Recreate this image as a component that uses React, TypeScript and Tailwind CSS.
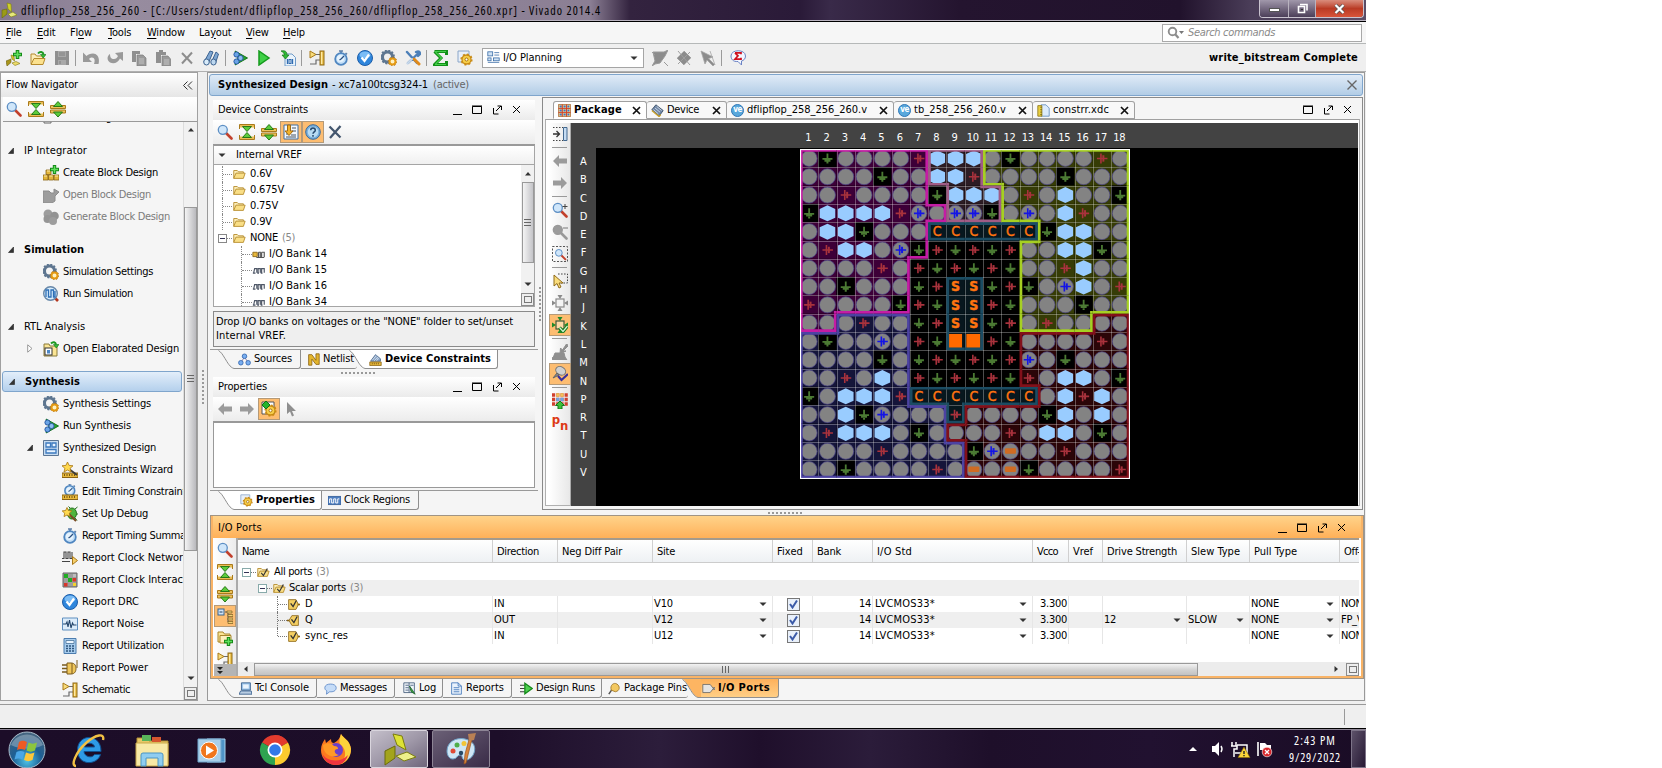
import { useLayoutEffect, useRef } from "react";
import type { ReactNode } from "react";

/** Single-line label; when `w` is given the tracking is adjusted so the label spans that width. */
function T({ children, w, b, className = "" }: { children: string; w?: number; b?: boolean; className?: string }) {
  const ref = useRef<HTMLSpanElement>(null);
  useLayoutEffect(() => {
    const el = ref.current;
    if (!el || !w) return;
    el.style.letterSpacing = "0px";
    const natural = el.getBoundingClientRect().width;
    el.style.letterSpacing = `${(w - natural) / children.length}px`;
  }, [w, children]);
  return (
    <span ref={ref} className={`inline-block shrink-0 whitespace-pre tracking-[-0.3px] ${b ? "font-bold" : ""} ${className}`}>
      {children}
    </span>
  );
}

const gold = "#e8b93c";
const dgold = "#8a6414";

const mag = (lens: string, handle: string) => (
  <>
    <path d="M9 9l5.500 5.500" stroke={handle} strokeWidth="2.600" strokeLinecap="round" />
    <circle cx="5.800" cy="5.800" r="4.500" fill={lens} stroke={handle === "#999" ? "#999" : "#5d8fc4"} strokeWidth="1.300" />
  </>
);
const gears = (
  <>
    <circle cx="6.500" cy="7" r="5" fill="none" stroke="#5e7690" strokeWidth="3" />
    <circle cx="6.500" cy="7" r="6.500" fill="none" stroke="#5e7690" strokeWidth="1.800" strokeDasharray="2 1.400" />
    <circle cx="11.500" cy="11.500" r="3" fill="#fff1c0" stroke="#e59a12" strokeWidth="2" />
    <circle cx="11.500" cy="11.500" r="4.300" fill="none" stroke="#b8740c" strokeWidth="1" strokeDasharray="1.600 1.700" />
  </>
);
const goldGear = (
  <>
    <circle cx="9.500" cy="9.500" r="4.500" fill="#f7cf4a" stroke="#c98a12" strokeWidth="1.300" />
    <circle cx="9.500" cy="9.500" r="5.400" fill="none" stroke="#c98a12" strokeWidth="1.400" strokeDasharray="2 2.200" />
    <circle cx="9.500" cy="9.500" r="1.500" fill="#fff" stroke="#a87008" />
  </>
);
const watch = (
  <>
    <path d="M6 1h4M8 1v3M12.500 3l1.500 1.300" stroke="#5d7fa8" strokeWidth="1.600" />
    <circle cx="8" cy="9" r="5.800" fill="#c3dff7" stroke="#4f86c0" strokeWidth="1.800" />
    <circle cx="7.500" cy="8.500" r="3.600" fill="#e6f3fd" />
    <path d="M8 9l3-3M8 9l-1.500 1" stroke="#284f80" strokeWidth="1.300" />
  </>
);
const check = (
  <>
    <circle cx="8" cy="8" r="7.500" fill="#2f86dc" stroke="#1c5da8" />
    <ellipse cx="8" cy="5" rx="5.500" ry="3.500" fill="#7bbcf5" />
    <path d="M4.500 7.500l3 3.500 4.500-6.500" stroke="#fff" strokeWidth="2.200" fill="none" />
  </>
);
const schem = (
  <>
    <path d="M1 1v7l6-3.500z" fill="#f8dc7a" stroke="#a87a1a" />
    <path d="M7 4.500h4M1 14h6v-4h4" stroke="#6b6b6b" strokeWidth="1.200" fill="none" />
    <rect x="11" y="1" width="4" height="14" fill={gold} stroke="#8f6a18" />
    <rect x="12" y="2" width="1.300" height="12" fill="#fce9a5" />
  </>
);
const runSyn = (
  <>
    <path d="M3 1l12.500 7L3 15l3-7z" fill="#27a52c" stroke="#17751b" />
    <circle cx="4.500" cy="4.500" r="2.600" fill="#6aa4e6" stroke="#2a5ca6" />
    <circle cx="4.500" cy="11.500" r="2.600" fill="#6aa4e6" stroke="#2a5ca6" />
    <circle cx="8.500" cy="8" r="2.600" fill="#8ebcf0" stroke="#2a5ca6" />
  </>
);
const folder = (
  <>
    <path d="M2 13V4h4l1.500 1.500H13V7" fill="#fcedb8" stroke="#b58a2c" />
    <path d="M4.500 7H15l-2 6H2z" fill="#f9de86" stroke="#b58a2c" />
  </>
);
const blueDiag = (
  <>
    <rect x="1" y="1" width="6" height="5" fill="#cfe2f5" stroke="#3c6ea8" />
    <path d="M9 2h6M9 5h6M1 14h14" stroke="#3c6ea8" />
    <rect x="1" y="8.500" width="4" height="3.500" fill="#cfe2f5" stroke="#3c6ea8" />
    <rect x="8" y="8.500" width="7" height="3.500" fill="#cfe2f5" stroke="#3c6ea8" />
  </>
);
const pinCross = (c: string, f: string, box: string) => (
  <>
    <rect x="4" y="4" width="8" height="8" fill={f} stroke={box} strokeWidth="1.200" />
    <path d="M8 4L5.500 0h5zM8 12l-2.500 4h5zM4 8L0 5.500v5zM12 8l4-2.500v5z" fill={c} />
  </>
);
const arrowL = <path d="M1 8l6-6v3.500h8v5H7V14z" fill="#9b9b9b" />;
const arrowR = <path d="M15 8L9 2v3.500H1v5h8V14z" fill="#9b9b9b" />;

const icons: Record<string, ReactNode> = {
  logo: (
    <>
      <path d="M6 1l4 1 .5 8L7 7z" fill="#cfd02b" stroke="#7c7d10" strokeWidth=".6" />
      <path d="M1 8l5-1v5l-5 4z" fill="#9a9b18" stroke="#6a6b0c" strokeWidth=".6" />
      <path d="M7 12l5-2 4 3-6 2z" fill="#e6e87a" stroke="#7c7d10" strokeWidth=".6" />
    </>
  ),
  newProj: (
    <>
      <path d="M5 5l3 1 .5 5L6 9z" fill="#d5c42d" stroke="#85780f" strokeWidth=".6" />
      <path d="M0 11l5-2v3.500L1 16z" fill="#a8951c" stroke="#6f6110" strokeWidth=".6" />
      <path d="M6 13l4-1.500 4 2-5 2z" fill="#ecdb6a" stroke="#85780f" strokeWidth=".6" />
      <path d="M11.500 0v9M7 4.500h9" stroke="#158a18" strokeWidth="3.600" />
      <path d="M11.500 1v7M8 4.500h7" stroke="#5fe05c" strokeWidth="1.600" />
    </>
  ),
  open: (
    <>
      <path d="M1 14V4h4l1.500 2H13v3" fill="#fcedb8" stroke="#b58a2c" />
      <path d="M4 8.500h11l-2 6H1z" fill="#fbe18e" stroke="#b58a2c" />
      <path d="M8 3.500c2-2.500 5-2 5.500 1" stroke="#1d9a22" strokeWidth="2" fill="none" />
      <path d="M10.500 4.500h5.500L13.200 8z" fill="#2fc034" stroke="#14731a" strokeWidth=".6" />
    </>
  ),
  save: (
    <>
      <path d="M1 1h14v14H1z" fill="#8f8f8f" />
      <path d="M4 1h8v6H4zM4 10h8v5H4z" fill="#a9a9a9" />
      <path d="M5 3h6M5 5h6M6 11v3" stroke="#808080" />
    </>
  ),
  undo: <path d="M0 2.500V12h9L6 9c2.500-2.500 5-1.500 5.500.5.300 1.500 0 3-.5 4.500h4.500C17 8 14.500 3.500 10 3.500 7 3.500 5 4.500 3.500 6z" fill="#999" />,
  redo: <path d="M16 2v9l-3-2.500c-2 4-6 6-10 4C-.5 10 0 6 3 4c0 3 1 5 4 5 2 0 3-1 4-3L8 3z" fill="#999" />,
  copy: (
    <>
      <path d="M1 1h8v3H5v8H1z" fill="#8f8f8f" />
      <path d="M6 5h6l3 3v8H6z" fill="#9a9a9a" stroke="#7d7d7d" strokeWidth=".7" />
      <path d="M8 9h5M8 11h5M8 13h5" stroke="#c2c2c2" />
    </>
  ),
  paste: (
    <>
      <path d="M1 2h3V0h4v2h3v3H6v8H1z" fill="#8f8f8f" />
      <path d="M7 6h6l2.500 3v7H7z" fill="#9a9a9a" stroke="#7d7d7d" strokeWidth=".7" />
      <path d="M9 10h5M9 12h5M9 14h5" stroke="#c2c2c2" />
    </>
  ),
  del: <path d="M3 3l10 10.500M13 2.500L3 13.500" stroke="#8d8d8d" strokeWidth="2" />,
  x: <path d="M2.500 2.500l11 11M13.500 2L3 14" stroke="#43566e" strokeWidth="2.300" />,
  binoc: (
    <>
      <path d="M7 1l3 1-5 12-4-2zM13 2l2.500 2-3 9-4-1z" fill="#7ea6d2" stroke="#3c628f" />
      <ellipse cx="3.500" cy="12" rx="2.800" ry="3" fill="#d9ecfa" stroke="#3c628f" />
      <ellipse cx="10.500" cy="12" rx="2.700" ry="3" fill="#bcd7ef" stroke="#3c628f" />
    </>
  ),
  runSyn,
  play: <path d="M3 1l10 7-10 7z" fill="#3fd046" stroke="#159a1d" strokeWidth="1.500" />,
  bit: (
    <>
      <path d="M5 4h7l3.500 3.500V16H5z" fill="#eaf3fb" stroke="#6f9bc8" />
      <path d="M7.500 9v5M12.500 9v5" stroke="#2f6bb0" strokeWidth="1.300" />
      <rect x="9" y="9.500" width="2" height="4" fill="none" stroke="#2f6bb0" />
      <path d="M1 1c4-1 6 .5 6 4h2L5.500 9 2 5h2.500C4 3 3 2 1 1z" fill="#2fb835" stroke="#14731a" strokeWidth=".7" />
    </>
  ),
  schem,
  watch,
  check,
  gears,
  tools: (
    <>
      <path d="M2 2l10 11M11 2c3-1.500 4 0 4 2l-2 2M13 3.500L3 13" stroke="#4c7fb8" strokeWidth="2.400" fill="none" strokeLinecap="round" />
      <path d="M9 9l5 5" stroke="#e08a1a" strokeWidth="3" strokeLinecap="round" />
      <path d="M7 9l-4.500 4.500" stroke="#c9d9ea" strokeWidth="2" strokeLinecap="round" />
    </>
  ),
  sigma: (
    <>
      <path d="M1.500 1.500h12v3.500M1.500 1.500L8 8l-6.500 6.500h12V11" stroke="#129018" strokeWidth="3" fill="none" />
      <path d="M2 1.500h11M2.500 2L8.500 8l-6 6M2 14.500h11" stroke="#45cf49" strokeWidth="1.200" fill="none" />
    </>
  ),
  goldSheet: (
    <>
      <path d="M1 1h11v11H1z" fill="#e8eff8" stroke="#8aa6c9" />
      {goldGear}
    </>
  ),
  greenSheet: (
    <>
      <path d="M1 1h12v12H1z" fill="#fff" stroke="#555" />
      {goldGear}
      <path d="M5 0l4 4-4 4-4-4z" fill="#25b52c" stroke="#0f7516" />
    </>
  ),
  blueDiag,
  pin1: <path d="M1 2h11l4-2-3 6-5 7-5 1-3 2 3-5zM12 12l4 4M0 2l3 3" fill="#8c8c8c" stroke="#9a9a9a" />,
  pin2: (
    <>
      <path d="M8 1l7 7-7 7-7-7z" fill="#8c8c8c" />
      <path d="M2 1l12 14M14 2L2 14M1 8l7 7M8 1l7 7" stroke="#9f9f9f" />
    </>
  ),
  pin3: <path d="M1 1l12 6-4.500 1.500 6 6L13 16 7 10l-2 4zM10 1l5 14" fill="#8c8c8c" stroke="#a5a5a5" strokeWidth=".8" />,
  bubble: (
    <>
      <path d="M1 6c0-7 14.500-7 14.500 0 0 3-2 4.500-4 5v4L8 11.500C3 12 1 9 1 6z" fill="#f4f7ff" stroke="#6b83c4" />
      <path d="M5 2.800h6v1.500M5 2.800l3 3-3 3.400h6V7.700" stroke="#cf1020" strokeWidth="1.700" fill="none" />
    </>
  ),
  mag: mag("#cfe6fa", "#c2402c"),
  magPlus: (
    <>
      {mag("#cfe6fa", "#c2402c")}
      <path d="M10.500 4.500h5M13 2v5" stroke="#444" />
    </>
  ),
  magMinus: (
    <>
      {mag("#9b9b9b", "#999")}
      <path d="M11 4h5" stroke="#777" />
    </>
  ),
  magFit: (
    <>
      <path d="M.5.5h15v15H.500z" fill="none" stroke="#555" strokeDasharray="2 1.500" />
      <g transform="translate(2.500 2.500) scale(.75)">{mag("#cfe6fa", "#c2402c")}</g>
    </>
  ),
  collapse: (
    <>
      <path d="M.5 5V.500h15V5M.5 11v4.500h15V11" fill="none" stroke="#a97a1c" />
      <path d="M1 2.200h14M1 13.800h14" stroke="#e9bd55" strokeWidth="2.400" />
      <path d="M3.500 2.500h9L8 7.500zM3.500 13.500h9L8 8.500z" fill="#5ccb3b" stroke="#257a17" />
    </>
  ),
  expand: (
    <>
      <path d="M.5 4.500h15v3H.500zM.5 9h15v3H.500z" fill="#edc35c" stroke="#a97a1c" />
      <path d="M3.500 5.500h9L8 .5zM3.500 11h9L8 16z" fill="#5ccb3b" stroke="#257a17" />
    </>
  ),
  vrefDoc: (
    <>
      <path d="M1 1h14v14H1z" fill="#f4f8fc" stroke="#3f6ea3" />
      <path d="M9 4h4M9 7h4M3 10h2M8 11h5M3 13h10" stroke="#456" />
      <path d="M4.500 1h3v6H10l-4 4.500L2 7h2.500z" fill="#f3b32a" stroke="#a36a10" />
    </>
  ),
  help: (
    <>
      <circle cx="8" cy="8" r="7.300" fill="#79b0dd" stroke="#386a9b" />
      <circle cx="8" cy="8" r="5.300" fill="#b8dcf4" />
      <path d="M5.700 6.200c0-3 4.600-3 4.600 0 0 1.600-2.300 1.700-2.300 3.500M8 11v1.700" stroke="#23486e" strokeWidth="1.500" fill="none" />
    </>
  ),
  blocks: (
    <>
      <path d="M0 10h5v5H0zM5.500 10h5v5h-5zM11 10h5v5h-5zM3 5h5v4.500H3z" fill="#e2b53a" stroke="#8a6414" strokeWidth=".8" />
      <path d="M1 11h3M6.500 11h3M12 11h3M4 6h3" stroke="#fbe9a3" />
      <path d="M11.500 0v9M7 4.500h9" stroke="#158a18" strokeWidth="3.400" />
      <path d="M11.500 1v7M8 4.500h7" stroke="#5fe05c" strokeWidth="1.400" />
    </>
  ),
  openGray: <path d="M0 4h6l2 2h3V2l5 3-4 4v5l-3 2H0z" fill="#9d9d9d" stroke="#8c8c8c" />,
  genGray: (
    <>
      <circle cx="5" cy="5" r="4.500" fill="#9d9d9d" />
      <circle cx="11.500" cy="7" r="4.300" fill="#939393" />
      <circle cx="4.500" cy="10" r="4" fill="#959595" />
      <circle cx="10" cy="12" r="4" fill="#9d9d9d" />
    </>
  ),
  wave: (
    <>
      <path d="M11 11l4 4" stroke="#b4371f" strokeWidth="2.600" />
      <circle cx="7.500" cy="7.500" r="6.800" fill="#d9edfc" stroke="#6787a8" strokeWidth="1.400" />
      <path d="M3 11V4h2.500v7H8V4h2.500v7h1.500V5" stroke="#2d6fb6" strokeWidth="1.300" fill="none" />
    </>
  ),
  elab: (
    <>
      <path d="M1 3h5l1 2h7v10H1z" fill="#fbe594" stroke="#8a7a3a" />
      <rect x="2" y="7" width="7" height="7" fill="#fff" stroke="#333" />
      <path d="M4 9h3v3.500H4z" fill="#4b86c6" />
      <path d="M8 2.500c2-2 4.500-1.500 5 1" stroke="#1d9a22" strokeWidth="2" fill="none" />
      <path d="M10.500 3.500H16L13.200 7z" fill="#2fc034" stroke="#14731a" strokeWidth=".6" />
    </>
  ),
  ipCat: (
    <>
      <path d="M1 1h7v12H1z" fill="#f4f4f4" stroke="#666" />
      <path d="M3 4h3M3 7h3" stroke="#888" />
    </>
  ),
  synDes: (
    <>
      <path d="M.5.500h15v15H.500z" fill="#c8dcf0" stroke="#5b7594" />
      <path d="M3 3h4.500v4H3zM9 3h4v4H9zM3 9.500h10v3.500H3z" fill="#eaf4ff" stroke="#3d7abf" strokeWidth="1.300" />
    </>
  ),
  wizard: (
    <>
      <path d="M0 11h16v4.500H0z" fill="#e8b93c" stroke={dgold} />
      <path d="M2.500 12v2M5 12v2M7.500 12v2M10 12v2M12.500 12v2" stroke="#7a5a12" />
      <path d="M7 7l8 6" stroke="#3b3b3b" strokeWidth="1.800" />
      <path d="M5.500 0l1.600 3.400 3.900.4-2.900 2.500.9 3.700-3.500-2L2 10l.9-3.700L0 3.800l3.900-.4z" fill="#ffd94f" stroke="#a77410" strokeWidth=".8" />
    </>
  ),
  editTim: (
    <>
      <g transform="translate(1 -1) scale(.85)">{watch}</g>
      <path d="M0 11h16v4.500H0z" fill="#e8b93c" stroke={dgold} />
      <path d="M2.500 12v2M5 12v2M7.500 12v2M10 12v2M12.500 12v2" stroke="#7a5a12" />
    </>
  ),
  debug: (
    <>
      <ellipse cx="10" cy="7.500" rx="4.500" ry="5.500" fill="#4fb53d" stroke="#1f6f18" />
      <path d="M13 3l2.500-2M14.500 8H16M13 12l2 2.500M8 2L6.500.5" stroke="#1f6f18" />
      <path d="M7 8l7 7" stroke="#7a4a22" strokeWidth="2" />
      <path d="M5 1.500l1.400 3 3.400.4-2.500 2.300.7 3.400L5 9l-3 1.600.7-3.400L.2 4.900l3.400-.4z" fill="#ffd94f" stroke="#a77410" strokeWidth=".8" />
    </>
  ),
  clkNet: (
    <>
      <path d="M0 8.500h2V2h2v6.500h2V2h2v6.500h2V2M0 11.500h8" stroke="#444" fill="none" strokeWidth="1.100" />
      <path d="M10.500 6.500v8L15.500 10.500z" fill="#f5cf6a" stroke="#a8781a" />
    </>
  ),
  clkInt: (
    <>
      <path d="M1 1h14v14H1z" fill="#9d9d9d" stroke="#666" />
      <path d="M2 2h4v4H2zM6 6h4v4H6z" fill="#1fae22" />
      <path d="M2 11h3.500v3.500H2zM10.500 6H14v3.500h-3.500z" fill="#d8352a" />
      <path d="M11 2h3v3h-3z" fill="#bdbdbd" />
      <path d="M11 11h3v3h-3z" fill="#f2d22e" />
    </>
  ),
  noise: (
    <>
      <path d="M.5 2h15v12H.500z" fill="#dcecfa" stroke="#5f8fbf" />
      <path d="M1 8h3l1-2 1 5 1.500-7 1.500 8 1.500-5 1 2h3" stroke="#24466c" fill="none" strokeWidth="1.100" />
    </>
  ),
  calc: (
    <>
      <path d="M2 .5h12v15H2z" fill="#a8cdee" stroke="#4b7cae" />
      <path d="M4 2.500h8v3H4z" fill="#eaf5ff" stroke="#3a658f" strokeWidth=".7" />
      <path d="M4 8h2M7 8h2M10 8h2M4 10.500h2M7 10.500h2M10 10.500h2M4 13h2M7 13h2M10 13h2" stroke="#2c557f" strokeWidth="1.500" />
    </>
  ),
  power: (
    <>
      <path d="M0 5h6M0 8.500h6M0 12h6" stroke="#7a5b1c" strokeWidth="1.500" />
      <path d="M5 3h4c4 0 5 3 5 5.500S13 14 9 14H5z" fill="#efc65a" stroke="#7a5b1c" />
      <path d="M15 0v8M10 3v11" stroke="#7a5b1c" />
    </>
  ),
  folder,
  folderChk: (
    <>
      {folder}
      <path d="M6 9l2.500 3L13 4" stroke="#333" strokeWidth="1.300" fill="none" />
    </>
  ),
  bankG: (
    <>
      <path d="M1 6h5v5H1z" fill="#e8b93c" stroke={dgold} />
      <path d="M7.500 6h2v5.500M11 6h3v5.500M5 12h9M7.500 6v5.500M11 6v5.500" stroke="#555" fill="none" strokeWidth="1.300" />
    </>
  ),
  bank: <path d="M2 11l1-4.500h2.500V11M7 11V6.500h2.500V11M11 11V6.500h3V11M1 11.500h3M6 11.500h2M10 11.500h2" stroke="#4d5666" fill="none" strokeWidth="1.300" />,
  sources: (
    <>
      <path d="M8 5L4 11M8 5l4 6" stroke="#7a6a9a" />
      <circle cx="8" cy="4" r="2.800" fill="#79aef0" stroke="#2f63ad" />
      <circle cx="3.500" cy="12" r="2.800" fill="#79aef0" stroke="#2f63ad" />
      <circle cx="12.500" cy="12" r="2.800" fill="#79aef0" stroke="#2f63ad" />
    </>
  ),
  netlist: <path d="M2 15V2h4l5 7V1h4v13h-4L6 7.500V15z" fill="#e3b52e" stroke={dgold} />,
  devCon: (
    <>
      <path d="M2 10L8 2l6 5v3z" fill="#8fa9c9" stroke="#3f5f86" />
      <path d="M4 9l5-6M6 10l5-5M9 10l3-4" stroke="#e9f1fa" strokeWidth=".8" />
      <path d="M1 11h14v4.500H1z" fill="#e8b93c" stroke={dgold} />
      <path d="M4 12v2M6.500 12v2M9 12v2M11.500 12v2" stroke="#7a5a12" />
    </>
  ),
  clkReg: (
    <>
      <path d="M0 3h16v10H0z" fill="#4f7fc0" stroke="#2f5a96" />
      <path d="M2 11V6h2.500v5H7V6h2.500v5H12V6h2" stroke="#fff" fill="none" strokeWidth="1.200" />
    </>
  ),
  cursor: <path d="M4 1v12l3-2.500 2 5 2-1-2-4.500h4z" fill="#8f8f8f" />,
  arrowL,
  arrowR,
  pkg: (
    <>
      <path d="M.5.500h15v15H.500z" fill="#f0d38a" stroke="#a86a3a" />
      <path d="M2 3h12M2 8h12M2 13h12" stroke="#3f74c4" strokeWidth="2.600" strokeDasharray="2.600 2.200" />
      <path d="M5.300.5v15M10.500.5v15" stroke="#cf3f2a" strokeWidth="1.200" />
      <path d="M.5 5.500h15M.5 10.500h15" stroke="#cf3f2a" strokeWidth="1.100" />
    </>
  ),
  device: (
    <>
      <path d="M6 1l9 7-5 7L1 7z" fill="#6f86a6" stroke="#33475f" />
      <path d="M3 7l6 5M5 5l6 5M7 3l6 5" stroke="#dfe8f2" strokeWidth="1" />
      <path d="M1 8l9 7.500L12 13" stroke="#c9a12c" strokeWidth="1.600" fill="none" />
    </>
  ),
  xdc: (
    <>
      <path d="M5 1h6l4 4v10H5z" fill="#dcebfb" stroke="#5d87bb" />
      <path d="M1 2h5v13H1z" fill="#e9cf3f" stroke="#8a7414" />
      <path d="M4 4h2M4 7h2M4 10h2M4 13h2" stroke="#6a5a10" />
    </>
  ),
  dock: (
    <>
      <path d="M1 1.500h10M1 14.500h10" stroke="#444" strokeDasharray="1.500 1.500" />
      <path d="M1 8h6M4.500 5l3 3-3 3" stroke="#333" fill="none" strokeWidth="1.300" />
      <path d="M11.500 1.500h3.500v13h-3.500z" fill="#c5dcf3" stroke="#42688f" />
    </>
  ),
  selArea: (
    <>
      <path d="M6 1h9.500v9H9" fill="none" stroke="#444" strokeDasharray="1.600 1.400" />
      <path d="M2 2v11l3-2.500 2 4.500 2-1-2-4h4z" fill="#f9dc7b" stroke="#8f6a18" />
    </>
  ),
  cross: pinCross("#8a8a8a", "#f4f4f4", "#8a8a8a"),
  crossG: (
    <>
      {pinCross("#1f8a2a", "#fdd9a8", "#3f5a3a")}
      <path d="M7.500 10.500l3.500 4 4.500-5.500" stroke="#147a1c" strokeWidth="3.400" fill="none" />
      <path d="M7.500 10.500l3.500 4 4.500-5.500" stroke="#d4f5d0" strokeWidth="1.200" fill="none" />
    </>
  ),
  broom: <path d="M15 0l1 2-5 5h3l-6 3 .5-6 2 2 4-6zM1 14l2-5h9l1 4 2 3H0l1-3z" fill="#8f8f8f" stroke="#8f8f8f" />,
  pushpin: (
    <>
      <ellipse cx="8.500" cy="4.500" rx="5.200" ry="4" fill="#d0d0d0" stroke="#777" transform="rotate(30 8 5)" />
      <path d="M5 7l-4 5 6-3z" fill="#888" stroke="#666" />
      <path d="M6 10l3.500 4L16 8" stroke="#39309c" strokeWidth="2.200" fill="none" />
    </>
  ),
  pinUp: (
    <>
      <path d="M0 2h16M0 6.500h16M0 11h16" stroke="#d0402f" strokeWidth="3.600" strokeDasharray="3.200 1" />
      <path d="M4.200 6.500h8" stroke="#6fa4e0" strokeWidth="3.600" strokeDasharray="3.200 1" />
      <path d="M4.200 2h8" stroke="#f0c05a" strokeWidth="3.600" strokeDasharray="3.200 1" />
      <path d="M8 8l4.500 4.500H10V16H6v-3.500H3.500z" fill="#3ec13a" stroke="#147a1c" />
    </>
  ),
  tree: (
    <>
      <rect x="1" y="1" width="6" height="6" fill="#cfe3f6" stroke="#39648f" />
      <path d="M2.500 4h3" stroke="#1c3c60" />
      <path d="M8 4h3v10M11 7h2M11 11h2" stroke="#555" fill="none" />
      <path d="M10 3h5v2h-5zM11 6.500h5v2h-5zM11 10h5v2h-5zM11 13.500h5v2h-5z" fill="#f2d27a" stroke="#7a5b1c" strokeWidth=".7" />
    </>
  ),
  folderAdd: (
    <>
      <path d="M1 12V2h5l1.500 2H13v8z" fill="#fbe594" stroke="#a8862c" />
      <path d="M3 13V5.500h11V13z" fill="#fdf0bc" stroke="#a8862c" />
      <path d="M11.500 7v9M7 11.500h9" stroke="#158a18" strokeWidth="3.400" />
      <path d="M11.500 8v7M8 11.500h7" stroke="#5fe05c" strokeWidth="1.400" />
    </>
  ),
  portIn: (
    <>
      <path d="M2 2h9l3 6-3 6H2z" fill="#f4cf63" stroke={dgold} />
      <path d="M4.500 6.500l3 4L11.500 3" stroke="#333" strokeWidth="1.600" fill="none" />
      <path d="M13 7h3v2h-3z" fill={dgold} />
    </>
  ),
  portOut: (
    <>
      <path d="M14 2H6L2.500 8 6 14h8z" fill="#f4cf63" stroke={dgold} />
      <path d="M5.500 6.500l3 4L12.500 3" stroke="#333" strokeWidth="1.600" fill="none" />
      <path d="M0 7h3v2H0z" fill={dgold} />
    </>
  ),
  tcl: (
    <>
      <path d="M3 1h11v9H3z" fill="#9cc4ea" stroke="#2d5686" />
      <path d="M5 3h7v5H5z" fill="#eaf4fd" />
      <path d="M2 11h13l1 4H0z" fill="#b9cde2" stroke="#2d5686" />
    </>
  ),
  msg: <path d="M1 7c0-6 14-6 14 0 0 4-4 5.500-8 5L3 15l.5-4C2 10 1 9 1 7z" fill="#c5dcf8" stroke="#5a86c6" />,
  log: (
    <>
      <path d="M1 1h13v12H1z" fill="#eef3f8" stroke="#3f5878" />
      <path d="M3 4h4M3 7h4M3 10h4M7.500 1v12M9 4h4" stroke="#3f5878" />
      <path d="M8 5l5 7 2 3-5-3z" fill="#3aa246" stroke="#1e5f28" />
    </>
  ),
  report: (
    <>
      <path d="M2 1h8l4 4v10H2z" fill="#e9f2fc" stroke="#3c73b8" />
      <path d="M10 1v4h4M4.500 7h7M4.500 9.500h7M4.500 12h7" stroke="#3c73b8" fill="none" />
    </>
  ),
  runs: (
    <>
      <path d="M0 4h6M0 8h6M0 12h6" stroke="#3b3b3b" strokeWidth="1.200" />
      <path d="M6 1.500l9 6.500-9 6.500z" fill="#4fcf50" stroke="#158a1b" strokeWidth="1.600" />
    </>
  ),
  goldPin: (
    <>
      <path d="M5 9l-4 6" stroke="#555" strokeWidth="1.800" />
      <path d="M4 10C2 4 7 0 11 2.500S15 11 9 12z" fill="#f3c860" stroke="#9a7020" />
    </>
  ),
  portGray: <path d="M1 3h9l4 5-4 5H1zM14 7h2v2h-2z" fill="#e4e4e4" stroke="#666" />,
};

function Ic({ n, s = 16 }: { n: string; s?: number }) {
  if (n === "ve")
    return (
      <span className="flex size-[13px] shrink-0 items-center justify-center rounded-full border border-[#2f78b8] bg-[#59a8dc] text-[8px] leading-none font-bold tracking-[-0.5px] text-white">
        ve
      </span>
    );
  if (n === "pn")
    return (
      <span className="flex w-4 items-center justify-center text-[13px] leading-none font-bold text-[#dd3a16]">
        <span className="-mt-2">p</span>
        <span className="mt-1">n</span>
      </span>
    );
  return (
    <svg width={s} height={s} viewBox="0 0 16 16" fill="none" className="shrink-0">
      {icons[n]}
    </svg>
  );
}

const Slot = ({ n, on, w = "w-[22px]" }: { n: string; on?: boolean; w?: string }) => (
  <div className={`flex h-[22px] ${w} shrink-0 items-center justify-center ${on ? "border border-[#b59a78] bg-[#fdbd71]" : ""}`}>
    <Ic n={n} />
  </div>
);

const WinBtns = () => (
  <svg width="70" height="12" viewBox="0 0 70 12" fill="none" stroke="#000" className="shrink-0">
    <path d="M1 10.500h9" />
    <path d="M20.500 2.500h9v7h-9zM20 2h10" />
    <path d="M41.500 4v6h5M44 7l5-5M45.500 2h4v4" />
    <path d="M61 2l7 7M68 2l-7 7" />
  </svg>
);

const Arrow = ({ d }: { d: string }) => (
  <svg width="8" height="8" viewBox="0 0 8 8" className="shrink-0">
    <path d={d} fill="#333" />
  </svg>
);
const UP = "M1 5.500h6L4 2z";
const DOWN = "M.5 2.500h7L4 6z";

const HDots = () => <div className="h-[2px] w-[34px] bg-[repeating-linear-gradient(90deg,#999_0_2px,transparent_2px_4px)]" />;
const VDots = () => <div className="h-[34px] w-[2px] bg-[repeating-linear-gradient(180deg,#999_0_2px,transparent_2px_4px)]" />;

const Corner = () => (
  <div className="flex h-[13px] w-[13px] shrink-0 items-center justify-center border border-[#8c8c8c] bg-[#eee]">
    <div className="h-[7px] w-[8px] border border-[#777]" />
  </div>
);

/* ---------- title, menu, toolbar ---------- */

function TitleBar() {
  return (
    <div className="flex h-[22px] shrink-0 items-start border-b border-black bg-[linear-gradient(90deg,#85788f_0,#978c9f_120px,#8b7f94_590px,#33233f_630px,#2a1a38_800px,#392a49_830px,#24142f_960px,#21122c_1180px,#4a3d58_1250px,#5a4d66_100%)]">
      <div className="flex h-[21px] flex-1 items-center border-b border-[#b9b3bf]">
        <div className="ml-px mr-1 flex">
          <Ic n="logo" />
        </div>
        <T w={580} className="pt-[2px] font-['Open_Sans',sans-serif] text-[12px] text-black">
          dflipflop_258_256_260 - [C:/Users/student/dflipflop_258_256_260/dflipflop_258_256_260.xpr] - Vivado 2014.4
        </T>
        <div className="mr-[2px] ml-auto flex h-[18px] self-start overflow-hidden rounded-b border border-t-0 border-[#c9c3cf]">
          <div className="flex w-[29px] items-end justify-center border-r border-[#b9b3bf] bg-gradient-to-b from-[#a198ab] to-[#4c3f59] pb-[5px]">
            <div className="h-[4px] w-[11px] border border-[#555] bg-white" />
          </div>
          <div className="flex w-[27px] items-center justify-center border-r border-[#b9b3bf] bg-gradient-to-b from-[#a198ab] to-[#4c3f59]">
            <svg width="11" height="11" viewBox="0 0 11 11" fill="none">
              <path d="M3 1.500h7v6M1.500 3.500h6v6h-6z" stroke="#fff" strokeWidth="1.600" />
              <path d="M4 6h2v1H4z" fill="#333" />
            </svg>
          </div>
          <div className="flex w-[47px] items-center justify-center bg-gradient-to-b from-[#d98c7c] via-[#b93a24] to-[#d8543a]">
            <svg width="11" height="10" viewBox="0 0 11 10">
              <path d="M1.500 1l8 8M9.500 1l-8 8" stroke="#555" strokeWidth="3.600" />
              <path d="M1.500 1l8 8M9.500 1l-8 8" stroke="#fff" strokeWidth="2.200" />
            </svg>
          </div>
        </div>
      </div>
    </div>
  );
}

const menus: [string, string, string, string][] = [
  ["", "F", "ile", "w-[31px]"],
  ["", "E", "dit", "w-[33px]"],
  ["Fl", "o", "w", "w-[38px]"],
  ["", "T", "ools", "w-[39px]"],
  ["", "W", "indow", "w-[52px]"],
  ["La", "y", "out", "w-[47px]"],
  ["", "V", "iew", "w-[37px]"],
  ["", "H", "elp", "w-[30px]"],
];

function MenuBar() {
  return (
    <div className="flex h-[22px] shrink-0 items-center border-b border-[#b5b8b8] bg-[#f6f6f6] pr-[4px] pl-[6px]">
      {menus.map(([a, u, c, w]) => (
        <div key={u + c} className={`${w} shrink-0 tracking-[-0.2px]`}>
          {a}
          <span className="underline underline-offset-2">{u}</span>
          {c}
        </div>
      ))}
      <div className="ml-auto flex h-[18px] w-[200px] items-center border border-[#a9a9a9] bg-white pl-1">
        <svg width="19" height="13" viewBox="0 0 19 13" fill="none">
          <circle cx="5.500" cy="5.500" r="3.800" stroke="#8d8d8d" strokeWidth="1.900" />
          <path d="M8 8l3.500 4" stroke="#8d8d8d" strokeWidth="2.200" />
          <path d="M12 5h5l-2.500 3z" fill="#777" />
        </svg>
        <T w={87} className="ml-[2px] text-[#8a8a8a] italic">
          Search commands
        </T>
      </div>
    </div>
  );
}

const Sep = ({ c = "" }: { c?: string }) => <div className={`h-4 w-px shrink-0 bg-[#9a9a9a] ${c}`} />;

function MainToolbar() {
  return (
    <div className="flex h-[28px] shrink-0 items-center border-b border-[#b0b0b0] bg-[#efefef] pr-[8px] pl-[2px]">
      {["newProj", "open", "save"].map((n) => <Slot key={n} n={n} w="w-6" />)}
      <Sep c="ml-px mr-[3px]" />
      {["undo", "redo", "copy", "paste", "del", "binoc"].map((n) => <Slot key={n} n={n} w="w-6" />)}
      <Sep c="ml-[2px] mr-[2px]" />
      {["runSyn", "play", "bit"].map((n) => <Slot key={n} n={n} w="w-6" />)}
      <Sep c="ml-px mr-[3px]" />
      {["schem", "watch", "check", "gears", "tools"].map((n) => <Slot key={n} n={n} w="w-6" />)}
      <Sep c="ml-px mr-[2px]" />
      {["sigma", "goldSheet"].map((n) => <Slot key={n} n={n} w="w-6" />)}
      <div className="mr-1 ml-[5px] flex h-[20px] w-[162px] items-center border border-[#a5a5a5] bg-white pr-[5px] pl-[4px]">
        <Ic n="blueDiag" s={13} />
        <T w={59} className="ml-[3px]">I/O Planning</T>
        <div className="ml-auto flex">
          <Arrow d={DOWN} />
        </div>
      </div>
      {["pin1", "pin2", "pin3"].map((n) => <Slot key={n} n={n} w="w-6" />)}
      <Sep c="ml-px mr-1" />
      <Slot n="bubble" w="w-6" />
      <T w={149} b className="ml-auto">write_bitstream Complete</T>
    </div>
  );
}

/* ---------- flow navigator ---------- */

const Tri = () => (
  <svg width="8" height="8" viewBox="0 0 8 8" className="shrink-0">
    <path d="M5.500 1v5.500H.500z" fill="#333" stroke="#222" strokeWidth=".6" />
  </svg>
);

function Section({ t, w, b, sel }: { t: string; w: number; b?: boolean; sel?: boolean }) {
  return (
    <div
      className={`mt-3 ml-[1px] flex h-[21px] w-[180px] shrink-0 items-center gap-[8px] pl-[6px] ${
        sel ? "rounded-[3px] border border-[#7fa5cc] bg-gradient-to-b from-[#e3eefa] to-[#b4d0ec] pl-[5px]" : ""
      }`}
    >
      <Tri />
      <T w={w} b={b}>{t}</T>
    </div>
  );
}

function Item({ n, t, w, deep, gray, mark }: { n: string; t: string; w: number; deep?: boolean; gray?: boolean; mark?: "open" | "closed" }) {
  return (
    <div className={`flex h-[22px] shrink-0 items-center pt-px ${gray ? "text-[#7b7b7b]" : ""}`}>
      <div className={`flex shrink-0 items-center ${deep ? "w-[61px]" : "w-[42px]"}`}>
        {mark && (
          <div className="ml-[26px] flex">
            {mark === "open" ? (
              <Tri />
            ) : (
              <svg width="6" height="9" viewBox="0 0 6 9">
                <path d="M.7.8v7.400L5 4.500z" fill="#fff" stroke="#999" />
              </svg>
            )}
          </div>
        )}
      </div>
      <Ic n={n} />
      <T w={w} className="ml-[4px]">{t}</T>
    </div>
  );
}

function FlowNavigator() {
  return (
    <div className="flex h-[629px] w-[198px] shrink-0 flex-col border border-[#a0a0a0] bg-[#f5f5f5]">
      <div className="flex h-[24px] shrink-0 items-center bg-gradient-to-b from-white to-[#e6e6e6] pr-1 pl-[5px]">
        <T w={72}>Flow Navigator</T>
        <svg width="10" height="9" viewBox="0 0 10 9" fill="none" className="ml-auto">
          <path d="M4.500.5l-4 4 4 4M9 .5l-4 4 4 4" stroke="#333" />
        </svg>
      </div>
      <div className="ml-[2px] flex h-[25px] shrink-0 items-center border-b border-[#999] bg-gradient-to-b from-white to-[#f2f2f2]">
        <Slot n="mag" />
        <Slot n="collapse" />
        <Slot n="expand" />
      </div>
      <div className="flex min-h-0 flex-1">
        <div className="flex w-[182px] flex-col overflow-hidden">
          <div className="-mt-4 shrink-0">
            <Item n="ipCat" t="IP Catalog" w={49} />
          </div>
          <Section t="IP Integrator" w={63} />
          <Item n="blocks" t="Create Block Design" w={95} />
          <Item n="openGray" t="Open Block Design" w={88} gray />
          <Item n="genGray" t="Generate Block Design" w={107} gray />
          <Section t="Simulation" w={60} b />
          <Item n="gears" t="Simulation Settings" w={90} />
          <Item n="wave" t="Run Simulation" w={70} />
          <Section t="RTL Analysis" w={61} />
          <Item n="elab" t="Open Elaborated Design" w={116} mark="closed" />
          <Section t="Synthesis" w={55} b sel />
          <Item n="gears" t="Synthesis Settings" w={88} />
          <Item n="runSyn" t="Run Synthesis" w={68} />
          <Item n="synDes" t="Synthesized Design" w={93} mark="open" />
          <Item deep n="wizard" t="Constraints Wizard" w={91} />
          <Item deep n="editTim" t="Edit Timing Constraints" w={109} />
          <Item deep n="debug" t="Set Up Debug" w={66} />
          <Item deep n="watch" t="Report Timing Summary" w={113} />
          <Item deep n="clkNet" t="Report Clock Networks" w={112} />
          <Item deep n="clkInt" t="Report Clock Interaction" w={120} />
          <Item deep n="check" t="Report DRC" w={57} />
          <Item deep n="noise" t="Report Noise" w={62} />
          <Item deep n="calc" t="Report Utilization" w={82} />
          <Item deep n="power" t="Report Power" w={66} />
          <Item deep n="schem" t="Schematic" w={48} />
        </div>
        <div className="flex w-[14px] flex-col items-center border-l border-[#ddd] bg-[#f1f1f1]">
          <div className="flex h-[85px] pt-1">
            <Arrow d={UP} />
          </div>
          <div className="flex h-[344px] w-[13px] items-center justify-center border border-[#999] bg-gradient-to-r from-[#f4f4f4] to-[#b9b9bd]">
            <div className="h-[8px] w-[7px] bg-[repeating-linear-gradient(180deg,#666_0_1px,transparent_1px_3px)]" />
          </div>
          <div className="mt-auto mb-[5px] flex">
            <Arrow d={DOWN} />
          </div>
          <Corner />
        </div>
      </div>
    </div>
  );
}

/* ---------- left column of the design view ---------- */

const PanelHead = ({ t, w }: { t: string; w: number }) => (
  <div className="flex h-[20px] shrink-0 items-center bg-gradient-to-b from-white to-[#ebebeb] pr-[13px] pl-[5px]">
    <T w={w}>{t}</T>
    <div className="ml-auto flex">
      <WinBtns />
    </div>
  </div>
);

const Slant = ({ fill = "#f5f5f5", c = "" }: { fill?: string; c?: string }) => (
  <svg width="20" height="19" viewBox="0 0 20 19" className={`shrink-0 ${c}`}>
    <path d="M0 0h1.500c3 2 4 4 6.500 8s5 9 9 10.500h3V0z" fill={fill} />
    <path d="M1.500.5c3 2 4 4 6.500 8s5 9 9 10h3" fill="none" stroke="#8f8f8f" />
  </svg>
);

function BTab({ n, t, w, cw, b, bg = "bg-[#f5f5f5]" }: { n: string; t: string; w: number; cw: string; b?: boolean; bg?: string }) {
  return (
    <div className={`flex h-[19px] shrink-0 items-center rounded-br-[3px] border-r border-b border-[#8f8f8f] ${cw} ${bg}`}>
      <Ic n={n} s={13} />
      <T w={w} b={b} className="ml-[3px]">{t}</T>
    </div>
  );
}

const VTreeRow = ({ n, t, w, deep, count }: { n: string; t: string; w: number; deep?: boolean; count?: boolean }) => (
  <div className="flex h-4 shrink-0 items-center">
    {deep ? (
      <>
        <div className="ml-[27px] h-4 w-px border-l border-dotted border-[#888]" />
        <div className="w-[10px] border-t border-dotted border-[#888]" />
      </>
    ) : count ? (
      <>
        <div className="ml-[4px] flex size-[9px] items-center justify-center border border-[#888]">
          <div className="h-px w-[5px] bg-[#335]" />
        </div>
        <div className="w-[5px] border-t border-dotted border-[#888]" />
      </>
    ) : (
      <>
        <div className="ml-[8px] h-4 w-px border-l border-dotted border-[#888]" />
        <div className="w-[9px] border-t border-dotted border-[#888]" />
      </>
    )}
    <Ic n={n} s={14} />
    <T w={w} className={deep ? "ml-[3px]" : "ml-[4px]"}>{t}</T>
    {count && <T w={13} className="ml-[4px] text-[#888]">(5)</T>}
  </div>
);

function LeftColumn() {
  return (
    <div className="flex w-[330px] shrink-0 flex-col pt-[3px]">
      <div className="ml-[5px] flex w-[322px] flex-col">
        <PanelHead t="Device Constraints" w={90} />
        <div className="flex h-[25px] shrink-0 items-center border-b border-[#999] bg-gradient-to-b from-white to-[#ececec] pl-[1px]">
          <Slot n="mag" />
          <Slot n="collapse" />
          <Slot n="expand" />
          <Slot n="vrefDoc" on />
          <Slot n="help" on />
          <Slot n="x" />
        </div>
        <div className="flex h-[20px] shrink-0 items-center border border-[#a5a5a5] border-t-[#999] bg-gradient-to-b from-white to-[#f0f0f0] pl-1">
          <Arrow d={DOWN} />
          <T w={66} className="ml-[10px]">Internal VREF</T>
        </div>
        <div className="flex h-[142px] shrink-0 border border-t-0 border-[#a5a5a5] bg-white">
          <div className="flex flex-1 flex-col overflow-hidden pt-px">
            <VTreeRow n="folder" t="0.6V" w={22} />
            <VTreeRow n="folder" t="0.675V" w={34} />
            <VTreeRow n="folder" t="0.75V" w={28} />
            <VTreeRow n="folder" t="0.9V" w={22} />
            <VTreeRow n="folder" t="NONE" w={28} count />
            <VTreeRow n="bankG" t="I/O Bank 14" w={58} deep />
            <VTreeRow n="bank" t="I/O Bank 15" w={58} deep />
            <VTreeRow n="bank" t="I/O Bank 16" w={58} deep />
            <VTreeRow n="bank" t="I/O Bank 34" w={58} deep />
          </div>
          <div className="flex w-[13px] flex-col items-center bg-[#f1f1f1]">
            <div className="flex h-[17px] items-center">
              <Arrow d={UP} />
            </div>
            <div className="flex h-[81px] w-[12px] items-center justify-center border border-[#999] bg-gradient-to-r from-[#f4f4f4] to-[#c4c4c8]">
              <div className="h-[8px] w-[7px] bg-[repeating-linear-gradient(180deg,#666_0_1px,transparent_1px_3px)]" />
            </div>
            <div className="mt-auto mb-[5px] flex">
              <Arrow d={DOWN} />
            </div>
            <Corner />
          </div>
        </div>
        <div className="mt-1 flex h-[36px] shrink-0 flex-col justify-center border border-[#8a8a8a] bg-[#efefef] pl-[2px] leading-[14px]">
          <T w={297} className="self-start">{'Drop I/O banks on voltages or the "NONE" folder to set/unset'}</T>
          <T w={70} className="self-start">Internal VREF.</T>
        </div>
      </div>
      <div className="mt-[2px] ml-[2px] flex h-[19px] w-[328px] shrink-0 border-t border-[#999] pl-[7px]">
        <Slant />
        <BTab n="sources" t="Sources" w={38} cw="w-[64px] pl-px" />
        <BTab n="netlist" t="Netlist" w={31} cw="w-[56px] pl-[6px] border-r-0" />
        <Slant fill="#fff" c="-ml-[9px]" />
        <BTab n="devCon" t="Device Constraints" w={106} cw="w-[131px] -ml-px pl-[2px]" b bg="bg-white" />
      </div>
      <div className="flex h-[9px] shrink-0 items-center justify-center pr-[30px]">
        <HDots />
      </div>
      <div className="ml-[5px] flex w-[322px] flex-col">
        <PanelHead t="Properties" w={49} />
        <div className="flex h-[24px] shrink-0 items-center bg-gradient-to-b from-white to-[#ececec] pl-px">
          <Slot n="arrowL" />
          <Slot n="arrowR" />
          <Slot n="greenSheet" on />
          <Slot n="cursor" />
        </div>
        <div className="h-[67px] shrink-0 border border-t-2 border-[#999] bg-white" />
      </div>
      <div className="mt-[2px] ml-[2px] flex h-[19px] w-[328px] shrink-0 border-t border-[#999] pl-[7px]">
        <Slant fill="#fff" />
        <BTab n="goldSheet" t="Properties" w={59} cw="w-[85px] pl-[3px]" b bg="bg-white" />
        <BTab n="clkReg" t="Clock Regions" w={66} cw="w-[97px] pl-[6px]" />
      </div>
    </div>
  );
}

/* ---------- package view ---------- */

const rowNames = "ABCDEFGHJKLMNPRTUV";
const pins = [
  "ogoooophhhogoooopo",
  "oooogoohhpoooogooo",
  "oopooooghhhopohoog",
  "ghhhhpbobbgobohpoo",
  "ohhgoooCCCCCCghhoo",
  "ophhobgpgpgpoohhgo",
  "oooopopgpgpgoophoo",
  "oogooogpSSgpgobhop",
  "poooogpgSSpgooogoo",
  "ooopoogpSSgpopoooo",
  "ogoobopgQQpgoooopo",
  "oooogogpgpgpbogooo",
  "oopohopgpgpgpohhog",
  "gohhhpCCCCCCCohpho",
  "oohgbooopooooghoho",
  "ophhhogoooopohhogo",
  "oooopoooogbmoopooo",
  "oogoooopomomgoooop",
];
const banks = [
  "MMMMMMMPPPLLLLLLLL",
  "MMMMMMMPPPLLLLLLLL",
  "MMMMMMMNPPPLLLLLLL",
  "MMMMMMMMPPPLLLLLLL",
  "MMMMMMMTTTTTTLLLLL",
  "MMMMMMMNNNNNLLLLLL",
  "MMMMMMNNNNNNLLLLLL",
  "MMMMMMNNTTNNLLLLLL",
  "MMMMMMNNTTNNLLLLLL",
  "MMBBBBNNTTNNLLLLRR",
  "BBBBBBNNTTNNRRRRRR",
  "BBBBBBNNNNNNRRRRRR",
  "BBBBBBNNNNNNRRRRRR",
  "BBBBBBTTTTTTTRRRRR",
  "BBBBBBBBTRRRRRRRRR",
  "BBBBBBBBRRRRRRRRRR",
  "BBBBBBBBBRRRRRRRRR",
  "BBBBBBBBBRRRRRRRRR",
];
const edge: Record<string, string> = { M: "#c41ca4", P: "#a05c86", L: "#a6d022", B: "#4c42a2", R: "#82101a", T: "#1b4c63" };
const tint: Record<string, string> = { M: "#3d0038", P: "#2c1c24", L: "#363c06", B: "#15153a", R: "#2b0508", T: "#07171e", N: "#000" };
const S = 18.3;
const at = (r: number, c: number) => (banks[r] && banks[r][c]) || "";

function Pin({ k, x, y }: { k: string; x: number; y: number }) {
  const ball = <circle cx={x} cy={y} r="8" fill="#838383" stroke="#4a4488" strokeWidth=".7" />;
  const cap = (c: string) => (
    <>
      <path d={`M${x - 5} ${y}h10.500M${x - 1} ${y - 5}v10`} stroke={c} strokeWidth="1.600" fill="none" />
      <path d={`M${x + 1.400} ${y - 3.200}v6.400`} stroke={c} strokeWidth="2" fill="none" />
    </>
  );
  switch (k) {
    case "o":
      return ball;
    case "g":
      return <path d={`M${x} ${y - 5}v6M${x - 5} ${y + 0.500}h10M${x - 3} ${y + 2.300}h6M${x - 1} ${y + 4.200}h2`} stroke="#4b7a33" strokeWidth="1.800" fill="none" />;
    case "p":
      return cap("#a8323c");
    case "b":
      return (
        <>
          {ball}
          {cap("#1414e6")}
        </>
      );
    case "h":
      return <path d={`M${x} ${y - 8}l7.800 3.600v8.800l-7.800 3.600l-7.800-3.600v-8.800z`} fill="#99ccff" />;
    case "Q":
      return <rect x={x - 7.500} y={y - 7.500} width="14" height="14" fill="#ff6a00" />;
    case "m":
      return (
        <>
          {ball}
          <rect x={x - 5.500} y={y - 3} width="11" height="5.500" rx="1" fill="#d06b22" />
        </>
      );
    default:
      return (
        <text x={x} y={y + 4.800} textAnchor="middle" fontSize="14" fontWeight={k === "S" ? 700 : 400} stroke="#ff7410" strokeWidth=".4" fill="#ff7410">
          {k}
        </text>
      );
  }
}

function PackageMap() {
  return (
    <svg width="330" height="330" viewBox="0 0 330 330" className="shrink-0">
      {banks.map((row, r) =>
        row.split("").map((b, c) => <rect key={`${r}-${c}`} x={c * S} y={r * S} width={S} height={S} fill={pins[r][c] === "g" ? "#000" : tint[b]} />),
      )}
      {rowNames.split("").map((n, i) => (
        <path key={n} d={`M0 ${Math.round(i * S) + 0.5}H330M${Math.round(i * S) + 0.5} 0V330`} stroke="#fff" strokeOpacity=".3" />
      ))}
      {pins.map((row, r) => row.split("").map((k, c) => <Pin key={`${r}-${c}`} k={k} x={c * S + S / 2} y={r * S + S / 2 + 0.3} />))}
      {banks.map((row, r) =>
        row.split("").map((b, c) => {
          if (b === "N") return null;
          const x = c * S;
          const y = r * S;
          const e = 2.7;
          const up = at(r - 1, c) !== b;
          const dn = at(r + 1, c) !== b;
          const lf = at(r, c - 1) !== b;
          const rt = at(r, c + 1) !== b;
          let d = "";
          const box = (px: number, py: number, w: number, h: number) => {
            d += `M${px} ${py}h${w}v${h}h${-w}z`;
          };
          if (up) box(x, y, S, e);
          if (dn) box(x, y + S - e, S, e);
          if (lf) box(x, y, e, S);
          if (rt) box(x + S - e, y, e, S);
          if (!up && !lf && at(r - 1, c - 1) !== b) box(x, y, e, e);
          if (!up && !rt && at(r - 1, c + 1) !== b) box(x + S - e, y, e, e);
          if (!dn && !lf && at(r + 1, c - 1) !== b) box(x, y + S - e, e, e);
          if (!dn && !rt && at(r + 1, c + 1) !== b) box(x + S - e, y + S - e, e, e);
          return d ? <path key={`${r}-${c}`} d={d} fill={edge[b]} /> : null;
        }),
      )}
      <rect x=".5" y=".5" width="329" height="329" fill="none" stroke="#fff" strokeWidth="1.200" />
    </svg>
  );
}

const CloseX = () => (
  <svg width="9" height="9" viewBox="0 0 9 9" className="ml-auto shrink-0">
    <path d="M1 1l7 7M8 1L1 8" stroke="#111" strokeWidth="1.700" />
  </svg>
);

function FTab({ n, t, w, cw, b }: { n: string; t: string; w: number; cw: string; b?: boolean }) {
  return (
    <div className={`flex h-[18px] shrink-0 items-center rounded-t-[3px] border border-[#a0a0a0] pr-[5px] pl-[4px] ${cw} ${b ? "border-b-white bg-white" : "border-l-0 bg-[#f8f8f8]"}`}>
      <Ic n={n} s={13} />
      <T w={w} b={b} className="ml-[3px]">{t}</T>
      <CloseX />
    </div>
  );
}

const HSep = () => <div className="my-[2px] ml-[3px] h-px w-[15px] shrink-0 bg-[#999]" />;

function PackagePanel() {
  return (
    <div className="flex h-[413px] w-[821px] shrink-0 flex-col border border-[#8a8a8a] bg-[#f5f5f5]">
      <div className="flex h-[21px] shrink-0 pt-[3px] pr-[9px] pl-[10px]">
        <FTab b n="pkg" t="Package" w={48} cw="w-[94px]" />
        <FTab n="device" t="Device" w={32} cw="w-[80px]" />
        <FTab n="ve" t="dflipflop_258_256_260.v" w={120} cw="w-[167px]" />
        <FTab n="ve" t="tb_258_256_260.v" w={92} cw="w-[139px]" />
        <FTab n="xdc" t="constrr.xdc" w={56} cw="w-[102px]" />
        <div className="ml-auto flex w-[51px] items-center justify-end overflow-hidden">
          <WinBtns />
        </div>
      </div>
      <div className="mb-px ml-[2px] flex h-[387px] w-[815px] border border-[#b0b0b0] border-t-[#a0a0a0] bg-white pt-[3px]">
        <div className="ml-[3px] flex w-[22px] flex-col border-r border-[#aaa] bg-gradient-to-r from-white to-[#e8e8e8]">
          <Slot n="dock" />
          <HSep />
          <Slot n="arrowL" />
          <Slot n="arrowR" />
          <HSep />
          <Slot n="magPlus" />
          <Slot n="magMinus" />
          <Slot n="magFit" />
          <HSep />
          <Slot n="selArea" />
          <Slot n="cross" />
          <Slot n="crossG" on />
          <HSep />
          <Slot n="broom" />
          <Slot n="pushpin" on />
          <HSep />
          <Slot n="pinUp" />
          <Slot n="pn" />
        </div>
        <div className="flex h-[383px] w-[787px] flex-col bg-[#434343] text-white">
          <div className="flex h-[25px] shrink-0 pt-[8px] pl-[228px]">
            {rowNames.split("").map((_, i) => (
              <div key={i} className="w-[18.300px] shrink-0 text-center text-[11px] leading-[14px] tracking-[-0.3px]">
                {i + 1}
              </div>
            ))}
          </div>
          <div className="flex flex-1">
            <div className="flex w-[25px] flex-col pt-[5px]">
              {rowNames.split("").map((n) => (
                <div key={n} className="h-[18.300px] shrink-0 text-center leading-[18px]">
                  {n}
                </div>
              ))}
            </div>
            <div className="flex flex-1 bg-black pt-[1px] pl-[204px]">
              <PackageMap />
            </div>
          </div>
        </div>
      </div>
    </div>
  );
}

/* ---------- I/O ports ---------- */

const cols: [string, number, string][] = [
  ["Name", 27, "w-[254px]"],
  ["Direction", 42, "w-[65px]"],
  ["Neg Diff Pair", 60, "w-[95px]"],
  ["Site", 18, "w-[120px]"],
  ["Fixed", 26, "w-[40px]"],
  ["Bank", 24, "w-[60px]"],
  ["I/O Std", 35, "w-[160px]"],
  ["Vcco", 21, "w-[36px]"],
  ["Vref", 20, "w-[34px]"],
  ["Drive Strength", 70, "w-[84px]"],
  ["Slew Type", 49, "w-[63px]"],
  ["Pull Type", 43, "w-[90px]"],
  ["Off-Chip", 38, "w-[20px]"],
];

const Expander = () => (
  <div className="flex size-[9px] shrink-0 items-center justify-center border border-[#8aa] bg-white">
    <div className="h-px w-[5px] bg-[#335]" />
  </div>
);

function Cell({ cw, children, end }: { cw: string; children?: ReactNode; end?: boolean }) {
  return (
    <div className={`flex h-4 shrink-0 items-center overflow-hidden border-l border-[#e6e6e6] pl-px ${cw} ${end ? "justify-end pr-px" : ""}`}>
      {children}
    </div>
  );
}

const Dd = ({ m = "mr-[5px]" }: { m?: string }) => (
  <div className={`ml-auto flex ${m}`}>
    <Arrow d={DOWN} />
  </div>
);

function PortRow({ name, w, dir, dw, site, out, off, shade, last }: { name: string; w: number; dir: string; dw: number; site: string; out?: boolean; off: string; shade?: boolean; last?: boolean }) {
  return (
    <div className={`flex h-4 shrink-0 ${shade ? "bg-[#efefef]" : ""}`}>
      <div className="flex w-[254px] shrink-0 items-center">
        <div className={`ml-[39px] w-px border-l border-dotted border-[#777] ${last ? "h-2 self-start" : "h-4"}`} />
        <div className="w-[9px] border-t border-dotted border-[#777]" />
        <Ic n={out ? "portOut" : "portIn"} s={13} />
        <T w={w} className="ml-[5px]">{name}</T>
      </div>
      <Cell cw="w-[65px]"><T w={dw}>{dir}</T></Cell>
      <Cell cw="w-[95px]" />
      <Cell cw="w-[120px]"><T w={19}>{site}</T><Dd /></Cell>
      <Cell cw="w-[40px]">
        <div className="ml-[13px] flex size-[13px] items-center justify-center border border-[#777] bg-[#e9f0fa]">
          <svg width="9" height="9" viewBox="0 0 9 9" fill="none">
            <path d="M1 4l2.500 3.500L8 .5" stroke="#3c5ba8" strokeWidth="2" />
          </svg>
        </div>
      </Cell>
      <Cell cw="w-[60px]" end><T w={12}>14</T></Cell>
      <Cell cw="w-[160px]"><T w={60} className="ml-px">LVCMOS33*</T><Dd /></Cell>
      <Cell cw="w-[36px]" end><T w={27}>3.300</T></Cell>
      <Cell cw="w-[34px]" />
      <Cell cw="w-[84px]">{out && <><T w={12}>12</T><Dd /></>}</Cell>
      <Cell cw="w-[63px]">{out && <><T w={29}>SLOW</T><Dd /></>}</Cell>
      <Cell cw="w-[90px]"><T w={28}>NONE</T><Dd /></Cell>
      <Cell cw="w-[20px]"><T>{off}</T></Cell>
    </div>
  );
}

function PortsPanel() {
  return (
    <div className="ml-[2px] flex h-[164px] w-[1154px] shrink-0 flex-col border border-[#a09484] bg-[#f9b366] px-[2px] pb-[2px]">
      <div className="flex h-[22px] shrink-0 items-center bg-gradient-to-b from-[#ffd389] to-[#ffb058] pt-px pr-[14px] pl-[5px]">
        <T w={44}>I/O Ports</T>
        <div className="ml-auto flex">
          <WinBtns />
        </div>
      </div>
      <div className="flex h-[138px] bg-white">
        <div className="flex w-[25px] shrink-0 flex-col overflow-hidden border-r-2 border-[#aaa] bg-gradient-to-r from-white to-[#ececec] pt-px pl-px">
          <Slot n="mag" />
          <Slot n="collapse" />
          <Slot n="expand" />
          <Slot n="tree" on />
          <Slot n="folderAdd" />
          <div className="h-[15px] shrink-0 overflow-hidden">
            <Slot n="schem" />
          </div>
          <div className="flex h-[12px] shrink-0 items-center bg-[#b4b4b4] pl-[3px]">
            <svg width="6" height="8" viewBox="0 0 6 8">
              <path d="M0 1h6L3 4zM0 5h6L3 8z" fill="#222" />
            </svg>
          </div>
        </div>
        <div className="flex w-[1121px] flex-col overflow-hidden border-t-2 border-[#a59a8c]">
          <div className="flex h-[23px] shrink-0 border-b border-[#ccc] bg-gradient-to-b from-white to-[#eef1f4]">
            {cols.map(([t, w, cw], i) => (
              <div key={t} className={`flex shrink-0 items-center overflow-hidden pt-[2px] ${cw} ${i ? "border-l border-[#d0d0d0]" : ""} pl-[4px]`}>
                <T w={w}>{t}</T>
              </div>
            ))}
          </div>
          <div className="mt-px flex h-4 shrink-0 items-center pl-[4px]">
            <Expander />
            <div className="w-[5px] border-t border-dotted border-[#777]" />
            <Ic n="folderChk" s={14} />
            <T w={38} className="ml-[4px]">All ports</T>
            <T w={13} className="ml-[4px] text-[#888]">(3)</T>
          </div>
          <div className="flex h-4 shrink-0 items-center bg-[#efefef] pl-[20px]">
            <Expander />
            <div className="w-[5px] border-t border-dotted border-[#777]" />
            <Ic n="folderChk" s={14} />
            <T w={57} className="ml-[3px]">Scalar ports</T>
            <T w={13} className="ml-[4px] text-[#888]">(3)</T>
          </div>
          <PortRow name="D" w={7} dir="IN" dw={11} site="V10" off="NONE" />
          <PortRow name="Q" w={8} dir="OUT" dw={21} site="V12" off="FP_VTT" out shade />
          <PortRow name="sync_res" w={43} dir="IN" dw={11} site="U12" off="NONE" last />
          <div className="mt-auto flex h-[14px] shrink-0 items-center bg-[#ececec]">
            <div className="flex w-[16px] justify-center">
              <Arrow d="M5.500 1v6L2 4z" />
            </div>
            <div className="flex h-[13px] w-[944px] items-center justify-center border border-[#999] bg-gradient-to-b from-[#f2f2f2] via-[#d4d4d4] to-[#c2c2c2]">
              <div className="h-[7px] w-[8px] bg-[repeating-linear-gradient(90deg,#666_0_1px,transparent_1px_3px)]" />
            </div>
            <div className="mr-[6px] ml-auto flex">
              <Arrow d="M2.500 1v6L6 4z" />
            </div>
            <Corner />
          </div>
        </div>
      </div>
    </div>
  );
}

function BottomTabs() {
  return (
    <div className="ml-[9px] flex h-[19px] shrink-0">
      <Slant />
      <BTab n="tcl" t="Tcl Console" w={54} cw="w-[80px] pl-[2px]" />
      <BTab n="msg" t="Messages" w={47} cw="w-[78px] pl-[7px]" />
      <BTab n="log" t="Log" w={17} cw="w-[48px] pl-[8px]" />
      <BTab n="report" t="Reports" w={38} cw="w-[69px] pl-[7px]" />
      <BTab n="runs" t="Design Runs" w={59} cw="w-[90px] pl-[8px]" />
      <BTab n="goldPin" t="Package Pins" w={63} cw="w-[86px] pl-[6px] border-r-0" />
      <Slant fill="#fdb562" c="-ml-[7px]" />
      <BTab n="portGray" t="I/O Ports" w={52} cw="w-[78px] pl-px" b bg="bg-gradient-to-b from-[#fdb05a] to-[#ffcf86]" />
    </div>
  );
}

function WorkArea() {
  return (
    <>
      <div className="flex h-[629px] w-[9px] shrink-0 items-center justify-center bg-[#efefef]">
        <VDots />
      </div>
      <div className="flex h-[629px] w-[1158px] shrink-0 flex-col border border-[#999] bg-[#f5f5f5] pt-px">
        <div className="mx-px flex h-[22px] shrink-0 items-center rounded-[3px] border border-[#7fa5cc] bg-gradient-to-b from-[#e0ebf7] to-[#b2cde6] pr-[5px] pl-[8px]">
          <T w={110} b>Synthesized Design</T>
          <T w={96} className="ml-[4px]">- xc7a100tcsg324-1</T>
          <T w={36} className="ml-[5px] text-[#666]">(active)</T>
          <svg width="10" height="10" viewBox="0 0 10 10" className="ml-auto">
            <path d="M.5.5l9 9M9.500.5l-9 9" stroke="#666" strokeWidth="1.400" />
          </svg>
        </div>
        <div className="mt-px flex h-[413px] shrink-0">
          <LeftColumn />
          <div className="flex w-[4px] shrink-0 items-center justify-center">
            <VDots />
          </div>
          <PackagePanel />
        </div>
        <div className="flex h-[5px] shrink-0 items-center justify-center pr-[2px]">
          <HDots />
        </div>
        <PortsPanel />
        <BottomTabs />
      </div>
    </>
  );
}

/* ---------- taskbar ---------- */

const Big = ({ children, w = "w-[60px]" }: { children: ReactNode; w?: string }) => (
  <div className={`flex h-[39px] shrink-0 items-center justify-center ${w}`}>
    <svg width="38" height="38" viewBox="0 0 38 38">{children}</svg>
  </div>
);

function Taskbar() {
  return (
    <div className="flex h-[40px] shrink-0 border-t border-black bg-[linear-gradient(90deg,#1c0d28_0,#1d0e29_500px,#2c1d3b_660px,#1f0f2b_760px,#2b1c3a_870px,#1e0f2a_990px,#211130_1150px,#1a0c25_100%)]">
      <div className="flex flex-1 border-t border-[#8d8595]">
        <Big w="w-[54px]">
          <defs>
            <radialGradient id="orb" cx=".5" cy=".8" r=".8">
              <stop offset="0" stopColor="#4fc3e8" />
              <stop offset=".5" stopColor="#1d5f94" />
              <stop offset="1" stopColor="#48657e" />
            </radialGradient>
          </defs>
          <circle cx="19" cy="19" r="18" fill="url(#orb)" stroke="#a9bccb" />
          <path d="M3 14c6-14 26-14 32 0-9 5-22 5-32 0z" fill="#fff" fillOpacity=".28" />
          <path d="M11 11c3-2 5-1.500 8 0l-2 8c-3-1.500-5-1.500-8 0z" fill="#ef5a24" />
          <path d="M20.500 11.500c3 1.500 5.500 1.500 8.500 0l-2 8c-3 1.500-5.500 1.500-8.500 0z" fill="#8cc63e" />
          <path d="M8.500 21c3-1.500 5-1.500 8 0l-2 7.500c-3-1.500-5-1.500-8 0z" fill="#4aa7e8" />
          <path d="M18 21.500c3 1.500 5.500 1.500 8.500 0l-2 7.500c-3 1.500-5.500 1.500-8.500 0z" fill="#fdc73a" />
        </Big>
        <Big w="w-[70px]">
          <path d="M31 20.500H14c0 5 8 7.500 10.500 3h6c-3 11-23 12-23-4.500 0-17 24-17 23.500 1.500zM14.500 16h10c-.5-5-9.500-5-10 0z" fill="#2e9be6" stroke="#10508f" />
          <path d="M6 35c-6 0 0-14 10-23S35 2 33 9" fill="none" stroke="#f3c144" strokeWidth="2.400" />
        </Big>
        <Big w="w-[56px]">
          <path d="M4 7h12v3h19v24H4z" fill="#e7c866" stroke="#b18e33" />
          <path d="M9 4h9v6H9z" fill="#58b35a" />
          <path d="M19 6h9v5h-9z" fill="#d5562f" />
          <path d="M3 12h32v23H3z" fill="#f8e9a6" stroke="#c9a84a" />
          <path d="M8 35V24q0-2 2-2h18q2 0 2 2v11h-5v-8H13v8z" fill="#8fcdf0" stroke="#4a95c4" />
        </Big>
        <Big w="w-[64px]">
          <path d="M14 8h18v23H14z" fill="#4f93c6" stroke="#a8d3f0" />
          <path d="M5 8h23v23H5z" fill="#a9cfe9" stroke="#6fa5cc" />
          <circle cx="16" cy="19.500" r="8.500" fill="#f0761d" stroke="#fff" />
          <path d="M13 14.500v10l8-5z" fill="#fff" />
        </Big>
        <Big w="w-[62px]">
          <path d="M19 19L6 11.500A15 15 0 0 1 32 11.500z" fill="#e33b2e" />
          <path d="M19 19l13-7.500A15 15 0 0 1 19 34z" fill="#fccb2e" />
          <path d="M19 19v15A15 15 0 0 1 6 11.500z" fill="#2fa350" />
          <path d="M19 12h13a15 15 0 0 0-13-8z" fill="#e33b2e" />
          <circle cx="19" cy="19" r="7.500" fill="#fff" />
          <circle cx="19" cy="19" r="5.800" fill="#3079e8" />
        </Big>
        <Big w="w-[60px]">
          <path d="M24 3c2 4 9 6 10 15 0 10-7 16-15 16S4 28 4 19c0-5 2-8 4-11l1 4 5-4c0 3 1 4 3 4 4-2 6-5 7-9z" fill="#fb7a1f" />
          <path d="M24 3c2 4 9 6 10 15 0 8-5 13-10 15 5-6 6-14 0-19-3-2-1-7 0-11z" fill="#fdd23a" />
          <circle cx="19" cy="19" r="7" fill="#6b3fc9" />
          <path d="M6 14c5-3 9-2 11 1 3 0 4 1 4 3-5 0-4 5 1 6-8 4-16-1-16-10z" fill="#ff9a26" />
          <path d="M5 22c3 8 18 11 26 2-2 7-7 10-12 10-7 0-12-4-14-12z" fill="#f0343f" />
        </Big>
        <div className="ml-[4px] flex w-[58px] items-center justify-center rounded-[2px] border border-[#d9d5dd] bg-gradient-to-br from-[#c4bfca] via-[#9f98a8] to-[#6f667b]">
          <svg width="34" height="34" viewBox="0 0 34 34">
            <path d="M11 2l9 2 4 14-9-5z" fill="#dde236" stroke="#7c7d10" />
            <path d="M3 19l10-5v12L3 33z" fill="#a3a41c" stroke="#6a6b0c" />
            <path d="M14 24l11-4 9 5-12 4z" fill="#eef08a" stroke="#7c7d10" />
          </svg>
        </div>
        <div className="ml-[4px] flex w-[58px] items-center justify-center rounded-[2px] border border-[#8d8595] bg-gradient-to-br from-[#6b6076] to-[#3a2c48]">
          <svg width="34" height="34" viewBox="0 0 34 34">
            <path d="M3 19C3 10 12 5 21 7s11 8 9 14-9 9-11 6 0-4-3-4-3 4-7 4-6-4-6-8z" fill="#cfe6f5" stroke="#6fa3c8" />
            <circle cx="9" cy="19" r="2.500" fill="#e04a34" />
            <circle cx="13" cy="13" r="2.500" fill="#4fae4a" />
            <circle cx="20" cy="11.500" r="2.500" fill="#f2c437" />
            <circle cx="17" cy="21" r="2.200" fill="#274a66" />
            <path d="M29 3l-7 28-2 1 1-10 5-18z" fill="#d9853b" stroke="#9a531d" strokeWidth=".7" />
            <path d="M24 2l8-1-2 7-5 1z" fill="#b98054" />
          </svg>
        </div>
        <div className="ml-auto flex items-center">
          <svg width="96" height="20" viewBox="0 0 96 20" fill="none" className="mr-[5px]">
            <path d="M3 12h8L7 8z" fill="#fff" />
            <path d="M26 7h3l4-4v14l-4-4h-3z" fill="#fff" />
            <path d="M35 7q2 3 0 6" stroke="#fff" strokeWidth="1.400" />
            <path d="M51 6h10v8H49M50 3v4M46 3v4M45 7h6v3h-3v8" stroke="#fff" strokeWidth="1.500" />
            <path d="M58 8l6 10.500H52z" fill="#fbd53a" stroke="#8b6c05" strokeWidth=".6" />
            <path d="M58 12v3M58 16v1.300" stroke="#222" strokeWidth="1.400" />
            <path d="M72 3v14" stroke="#fff" strokeWidth="1.600" />
            <path d="M74 4h5l2 2h4v7h-5l-1-2h-5z" fill="#fff" />
            <circle cx="81" cy="13" r="4.800" fill="#d8262b" stroke="#fff" strokeWidth=".6" />
            <path d="M79 11l4 4M83 11l-4 4" stroke="#fff" strokeWidth="1.300" />
          </svg>
          <div className="flex w-[56px] flex-col items-center font-['Open_Sans',sans-serif] text-[12px] leading-[17px] text-white">
            <T w={42}>2:43 PM</T>
            <T w={52}>9/29/2022</T>
          </div>
          <div className="ml-[8px] h-[38px] w-[15px] border border-[#7d7488] bg-gradient-to-br from-[#5d5269] to-[#281a35]" />
        </div>
      </div>
    </div>
  );
}

export default function App() {
  return (
    <div className="h-[768px] w-full overflow-hidden bg-white">
      <div className="flex h-[768px] w-[1366px] cursor-default flex-col overflow-hidden bg-[#efefef] font-['DejaVu_Sans_Condensed','DejaVu_Sans',sans-serif] text-[11px] leading-[14px] text-black [font-stretch:condensed]">
        <TitleBar />
        <MenuBar />
        <MainToolbar />
        <div className="flex h-[632px] shrink-0">
          <FlowNavigator />
          <WorkArea />
        </div>
        <div className="flex h-[24px] shrink-0 items-center border-t border-[#999] bg-[#efefef] pr-[21px]">
          <div className="ml-auto h-4 w-px bg-[#999]" />
        </div>
        <Taskbar />
      </div>
    </div>
  );
}
